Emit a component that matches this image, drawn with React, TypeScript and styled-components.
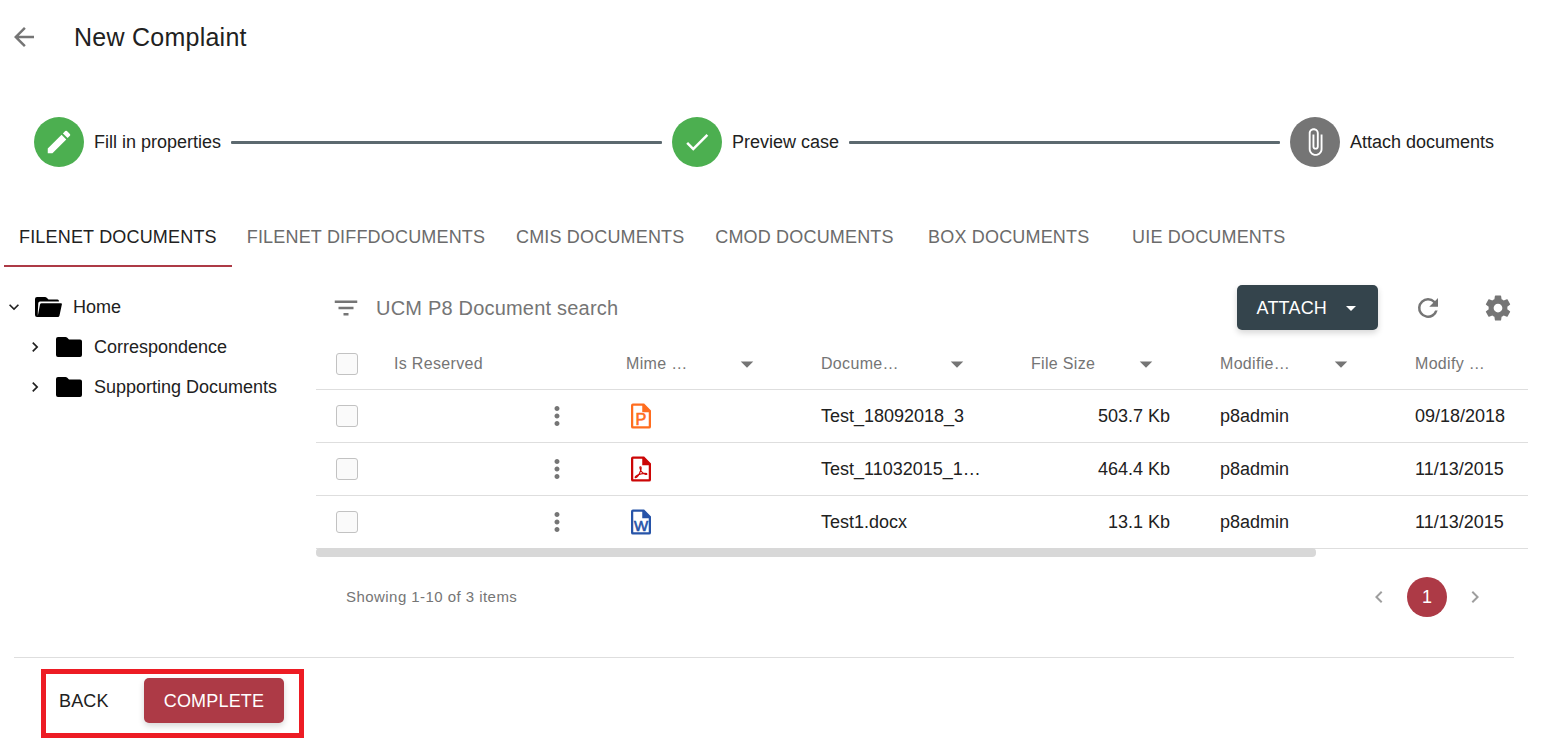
import React from "react";
import styled, { createGlobalStyle } from "styled-components";

const GlobalStyle = createGlobalStyle`
  *, *::before, *::after { box-sizing: border-box; }
  body {
    margin: 0;
    background: #fff;
    color: #212121;
    font-family: "Liberation Sans", Arial, sans-serif;
    font-size: 18px;
    line-height: 24px;
  }
  button, input { font: inherit; color: inherit; }
`;

const Svg = styled.svg<{ $size?: number }>`
  display: block;
  flex: none;
  width: ${(p) => p.$size ?? 30}px;
  height: ${(p) => p.$size ?? 30}px;
  fill: currentColor;
`;

const paths = {
  back: "M20 11H7.83l5.59-5.59L12 4l-8 8 8 8 1.41-1.41L7.83 13H20v-2z",
  pencil:
    "M3 17.25V21h3.75L17.81 9.94l-3.75-3.75L3 17.25zM20.71 7.04a1 1 0 0 0 0-1.41l-2.34-2.34a1 1 0 0 0-1.41 0l-1.83 1.83 3.75 3.75 1.83-1.83z",
  check: "M9 16.17L4.83 12l-1.42 1.41L9 19 21 7l-1.41-1.41z",
  clip: "M16.5 6v11.5c0 2.21-1.79 4-4 4s-4-1.79-4-4V5a2.5 2.5 0 0 1 5 0v10.5c0 .55-.45 1-1 1s-1-.45-1-1V6H10v9.5a2.5 2.5 0 0 0 5 0V5c0-2.21-1.79-4-4-4S7 2.79 7 5v12.5c0 3.04 2.46 5.5 5.5 5.5s5.5-2.46 5.5-5.5V6h-1.5z",
  down: "M7 10l5 5 5-5z",
  filter: "M10 18h4v-2h-4v2zM3 6v2h18V6H3zm3 7h12v-2H6v2z",
  refresh:
    "M17.65 6.35A7.96 7.96 0 0 0 12 4a8 8 0 1 0 7.73 10h-2.08A6 6 0 1 1 12 6c1.66 0 3.14.69 4.22 1.78L13 11h7V4l-2.35 2.35z",
  gear: "M19.43 12.98c.04-.32.07-.64.07-.98s-.03-.66-.07-.98l2.11-1.65c.19-.15.24-.42.12-.64l-2-3.46c-.12-.22-.39-.3-.61-.22l-2.49 1c-.52-.4-1.08-.73-1.69-.98l-.38-2.65A.49.49 0 0 0 14 2h-4c-.25 0-.46.18-.49.42l-.38 2.65c-.61.25-1.17.59-1.69.98l-2.49-1c-.23-.09-.49 0-.61.22l-2 3.46c-.13.22-.07.49.12.64l2.11 1.65c-.04.32-.07.65-.07.98s.03.66.07.98l-2.11 1.65c-.19.15-.24.42-.12.64l2 3.46c.12.22.39.3.61.22l2.49-1c.52.4 1.08.73 1.69.98l.38 2.65c.03.24.24.42.49.42h4c.25 0 .46-.18.49-.42l.38-2.65c.61-.25 1.17-.59 1.69-.98l2.49 1c.23.09.49 0 .61-.22l2-3.46c.12-.22.07-.49-.12-.64l-2.11-1.65zM12 15.5c-1.93 0-3.5-1.57-3.5-3.5s1.57-3.5 3.5-3.5 3.5 1.57 3.5 3.5-1.57 3.5-3.5 3.5z",
  more: "M12 8c1.1 0 2-.9 2-2s-.9-2-2-2-2 .9-2 2 .9 2 2 2zm0 2c-1.1 0-2 .9-2 2s.9 2 2 2 2-.9 2-2-.9-2-2-2zm0 6c-1.1 0-2 .9-2 2s.9 2 2 2 2-.9 2-2-.9-2-2-2z",
  left: "M15.41 7.41L14 6l-6 6 6 6 1.41-1.41L10.83 12z",
  right: "M10 6L8.59 7.41 13.17 12l-4.58 4.59L10 18l6-6z",
  expand: "M16.59 8.59L12 13.17 7.41 8.59 6 10l6 6 6-6z",
};

const Icon = ({ name, size }: { name: keyof typeof paths; size?: number }) => (
  <Svg viewBox="0 0 24 24" $size={size} aria-hidden="true">
    <path d={paths[name]} />
  </Svg>
);

const FolderSvg = styled.svg`
  display: block;
  flex: none;
  width: 27px;
  height: 20px;
`;

const Folder = ({ open }: { open?: boolean }) => (
  <FolderSvg viewBox="0 0 27 20" aria-hidden="true">
    {open ? (
      <path d="M2 0h8q1 0 2 1l1.500 1.500H22.500q1.500 0 1.500 2H5q-1.500 0-1.700 1.500L2.800 15V19L5 7.500Q5.300 6.200 6.500 6.200H26q1.100 0 .9 1L24.500 18.500Q24.200 20 22.700 20H2Q0 20 0 18V2Q0 0 2 0z" />
    ) : (
      <path d="M2 0h7.500q1 0 1.800.8L13 2.500H24q2 0 2 2V18q0 2-2 2H2Q0 20 0 18V2Q0 0 2 0z" />
    )}
  </FolderSvg>
);

type FileKind = "ppt" | "pdf" | "doc";
const fileColors: Record<FileKind, string> = { ppt: "#ff6d1f", pdf: "#cc0606", doc: "#2754a8" };
const fileNames: Record<FileKind, string> = { ppt: "PowerPoint", pdf: "PDF", doc: "Word" };

const FileSvg = styled(Svg)<{ $kind: FileKind }>`
  color: ${(p) => fileColors[p.$kind]};
`;

const FileIcon = ({ kind }: { kind: FileKind }) => (
  <FileSvg viewBox="0 0 24 24" role="img" aria-label={fileNames[kind]} $kind={kind}>
    <path
      fillRule="evenodd"
      d="M5.500 2H14.500L20 7.500V20.500Q20 22 18.500 22H5.500Q4 22 4 20.500V3.500Q4 2 5.500 2zM5.800 3.800V20.200H18.200V9H13V3.800z"
    />
    {kind === "pdf" ? (
      <path
        d="M11.300 10.200C12.300 9.900 12.300 11.500 11.700 13.200C10.800 15.800 9 18.900 7.600 18.900C6.300 18.500 9.500 16.400 12 15.900C14.300 15.300 16.800 15.300 16.800 16.100C16.500 16.900 14.300 16 13 14.700C11.600 13.300 10.600 10.600 11.300 10.200z"
        fill="none"
        stroke="currentColor"
        strokeWidth="0.900"
      />
    ) : (
      <text
        x="12"
        y="19"
        textAnchor="middle"
        fontSize={kind === "doc" ? 12 : 13}
        stroke="currentColor"
        strokeWidth="0.500"
      >
        {kind === "doc" ? "W" : "P"}
      </text>
    )}
  </FileSvg>
);

const IconButton = styled.button<{ $muted?: boolean }>`
  display: flex;
  padding: 0;
  border: 0;
  background: none;
  color: ${(p) => (p.$muted ? "#9e9e9e" : "#757575")};
  cursor: pointer;
`;

const Header = styled.header`
  display: flex;
  align-items: center;
  gap: 35px;
  height: 74px;
  padding-left: 9px;
`;

const Title = styled.h1`
  margin: 0;
  font-size: 25px;
  line-height: 32px;
  font-weight: 400;
  letter-spacing: 0.01em;
`;

const Stepper = styled.ol`
  display: flex;
  align-items: center;
  gap: 10px;
  margin: 0;
  padding: 43px 50px 40px 34px;
  list-style: none;
`;

const Step = styled.li<{ $last?: boolean }>`
  display: flex;
  align-items: center;
  gap: 10px;
  flex: ${(p) => (p.$last ? "none" : "1 1 auto")};
  white-space: nowrap;
  ${(p) =>
    !p.$last &&
    `&::after {
      content: "";
      flex: 1;
      height: 3px;
      border-radius: 1px;
      background: #5c696f;
    }`}
`;

const StepBadge = styled.span<{ $done?: boolean }>`
  display: grid;
  place-items: center;
  width: 50px;
  height: 50px;
  border-radius: 50%;
  background: ${(p) => (p.$done ? "#4caf50" : "#757575")};
  color: #fff;
`;

const Tabs = styled.nav`
  display: flex;
  padding-left: 4px;
`;

const Tab = styled.button<{ $active?: boolean }>`
  min-width: 200px;
  height: 60px;
  padding: 0 15px;
  border: 0;
  box-shadow: ${(p) => (p.$active ? "inset 0 -2px #ad3a46" : "none")};
  background: none;
  color: ${(p) => (p.$active ? "#212121" : "#6b6b6b")};
  letter-spacing: 0.01em;
  white-space: nowrap;
  cursor: pointer;
`;

const Main = styled.main`
  display: grid;
  grid-template-columns: 300px minmax(0, 1fr);
  gap: 16px;
  padding: 18px 16px 40px 0;
`;

const Tree = styled.ul`
  margin: 0;
  padding: 2px 0 0 4px;
  list-style: none;
`;

const SubTree = styled.ul`
  margin: 0;
  padding: 0 0 0 21px;
  list-style: none;
`;

const TreeItem = styled.button`
  display: flex;
  align-items: center;
  gap: 11px;
  height: 40px;
  padding: 0;
  border: 0;
  background: none;
  cursor: pointer;
`;

const Toolbar = styled.div`
  display: flex;
  align-items: center;
  padding: 0 15px;
  margin-bottom: 7px;
`;

const Search = styled.input`
  flex: 1;
  min-width: 0;
  margin-left: 15px;
  padding: 0;
  border: 0;
  outline: 0;
  background: none;
  font-size: 20px;
  letter-spacing: 0.01em;
  &::placeholder { color: #757575; opacity: 1; }
`;

const Tools = styled.div`
  display: flex;
  align-items: center;
  gap: 40px;
`;

const Button = styled.button<{ $tone?: "dark" | "primary" }>`
  display: flex;
  align-items: center;
  gap: 12px;
  height: 45px;
  padding: 0 20px;
  border: 0;
  border-radius: 5px;
  background: ${(p) => (p.$tone === "dark" ? "#34444c" : p.$tone === "primary" ? "#ad3a46" : "transparent")};
  color: ${(p) => (p.$tone ? "#fff" : "#212121")};
  box-shadow: ${(p) => (p.$tone ? "0 3px 6px rgba(0, 0, 0, 0.16)" : "none")};
  letter-spacing: 0.01em;
  cursor: pointer;
`;

const AttachButton = styled(Button)`
  margin-right: 35px;
  padding-right: 15px;
`;

const TableFrame = styled.div`
  overflow: hidden;
`;

const Table = styled.table`
  width: 100%;
  table-layout: fixed;
  border-collapse: separate;
  border-spacing: 0;
`;

const Col = styled.col<{ $w?: number }>`
  width: ${(p) => (p.$w ? `${p.$w}px` : "auto")};
`;

const Th = styled.th`
  height: 53px;
  padding: 2px 0 0 15px;
  border-bottom: 1px solid #dedede;
  color: #757575;
  font-size: 16px;
  font-weight: 400;
  letter-spacing: 0.02em;
  text-align: left;
  white-space: nowrap;
`;

const ThContent = styled.div`
  display: flex;
  align-items: center;
  justify-content: space-between;
  padding-right: 44px;
`;

const Td = styled.td<{ $numeric?: boolean }>`
  height: 53px;
  padding: 0 ${(p) => (p.$numeric ? 35 : 0)}px 0 15px;
  border-bottom: 1px solid #dedede;
  text-align: ${(p) => (p.$numeric ? "right" : "left")};
  white-space: nowrap;
`;

const Check = styled.input`
  display: block;
  appearance: none;
  width: 22px;
  height: 22px;
  margin: 0 0 0 5px;
  border: 1px solid #c2c2c2;
  border-radius: 3px;
  background: #fafafa;
  &:checked { background: #ad3a46; }
`;

const ScrollThumb = styled.div`
  width: 82.5%;
  height: 9px;
  margin-top: -1px;
  border-radius: 4px;
  background: #d8d8d8;
`;

const Pager = styled.div`
  display: flex;
  align-items: center;
  justify-content: space-between;
  padding: 20px 41px 0 30px;
`;

const Caption = styled.span`
  color: #757575;
  font-size: 15px;
  letter-spacing: 0.03em;
`;

const Pages = styled.div`
  display: flex;
  align-items: center;
  gap: 16px;
`;

const PageButton = styled.button`
  width: 40px;
  height: 40px;
  padding: 0;
  border: 0;
  border-radius: 50%;
  background: #ad3a46;
  color: #fff;
`;

const Footer = styled.footer`
  margin: 0 30px 0 14px;
  padding: 20px 25px;
  border-top: 1px solid #dedede;
`;

const Actions = styled.div`
  position: relative;
  display: inline-flex;
  gap: 15px;
  &::after {
    content: "";
    position: absolute;
    inset: -9px -20px -15px 2px;
    border: 5px solid #ed1c24;
    pointer-events: none;
  }
`;

const tabs = [
  "FILENET DOCUMENTS",
  "FILENET DIFFDOCUMENTS",
  "CMIS DOCUMENTS",
  "CMOD DOCUMENTS",
  "BOX DOCUMENTS",
  "UIE DOCUMENTS",
];

const rows: { kind: FileKind; name: string; size: string; by: string; date: string }[] = [
  { kind: "ppt", name: "Test_18092018_3", size: "503.7 Kb", by: "p8admin", date: "09/18/2018" },
  { kind: "pdf", name: "Test_11032015_1…", size: "464.4 Kb", by: "p8admin", date: "11/13/2015" },
  { kind: "doc", name: "Test1.docx", size: "13.1 Kb", by: "p8admin", date: "11/13/2015" },
];

const SortableTh = ({ label }: { label: string }) => (
  <Th scope="col">
    <ThContent>
      {label}
      <IconButton aria-label={`Sort by ${label}`}>
        <Icon name="down" />
      </IconButton>
    </ThContent>
  </Th>
);

export default function App() {
  return (
    <>
      <GlobalStyle />
      <Header>
        <IconButton aria-label="Go back">
          <Icon name="back" />
        </IconButton>
        <Title>New Complaint</Title>
      </Header>

      <Stepper>
        <Step>
          <StepBadge $done>
            <Icon name="pencil" />
          </StepBadge>
          Fill in properties
        </Step>
        <Step>
          <StepBadge $done>
            <Icon name="check" />
          </StepBadge>
          Preview case
        </Step>
        <Step $last>
          <StepBadge>
            <Icon name="clip" />
          </StepBadge>
          Attach documents
        </Step>
      </Stepper>

      <Tabs>
        {tabs.map((tab, i) => (
          <Tab key={tab} $active={i === 0}>
            {tab}
          </Tab>
        ))}
      </Tabs>

      <Main>
        <Tree>
          <li>
            <TreeItem>
              <Icon name="expand" size={20} />
              <Folder open />
              Home
            </TreeItem>
            <SubTree>
              {["Correspondence", "Supporting Documents"].map((name) => (
                <li key={name}>
                  <TreeItem>
                    <Icon name="right" size={20} />
                    <Folder />
                    {name}
                  </TreeItem>
                </li>
              ))}
            </SubTree>
          </li>
        </Tree>

        <section>
          <Toolbar>
            <IconButton aria-label="Filter">
              <Icon name="filter" />
            </IconButton>
            <Search type="text" aria-label="Document search" placeholder="UCM P8 Document search" />
            <AttachButton $tone="dark">
              ATTACH
              <Icon name="down" size={24} />
            </AttachButton>
            <Tools>
              <IconButton aria-label="Refresh">
                <Icon name="refresh" />
              </IconButton>
              <IconButton aria-label="Settings">
                <Icon name="gear" />
              </IconButton>
            </Tools>
          </Toolbar>

          <TableFrame>
            <Table>
              <colgroup>
                <Col $w={63} />
                <Col $w={148} />
                <Col $w={84} />
                <Col $w={195} />
                <Col $w={210} />
                <Col $w={189} />
                <Col $w={195} />
                <Col />
              </colgroup>
              <thead>
                <tr>
                  <Th>
                    <Check type="checkbox" aria-label="Select all" />
                  </Th>
                  <Th scope="col">Is Reserved</Th>
                  <Th />
                  <SortableTh label="Mime …" />
                  <SortableTh label="Docume…" />
                  <SortableTh label="File Size" />
                  <SortableTh label="Modifie…" />
                  <Th scope="col">Modify …</Th>
                </tr>
              </thead>
              <tbody>
                {rows.map((row) => (
                  <tr key={row.name}>
                    <Td>
                      <Check type="checkbox" aria-label={`Select ${row.name}`} />
                    </Td>
                    <Td />
                    <Td>
                      <IconButton aria-label="More actions">
                        <Icon name="more" />
                      </IconButton>
                    </Td>
                    <Td>
                      <FileIcon kind={row.kind} />
                    </Td>
                    <Td>{row.name}</Td>
                    <Td $numeric>{row.size}</Td>
                    <Td>{row.by}</Td>
                    <Td>{row.date}</Td>
                  </tr>
                ))}
              </tbody>
            </Table>
            <ScrollThumb />
          </TableFrame>

          <Pager>
            <Caption>Showing 1-10 of 3 items</Caption>
            <Pages>
              <IconButton $muted aria-label="Previous page">
                <Icon name="left" size={24} />
              </IconButton>
              <PageButton>1</PageButton>
              <IconButton $muted aria-label="Next page">
                <Icon name="right" size={24} />
              </IconButton>
            </Pages>
          </Pager>
        </section>
      </Main>

      <Footer>
        <Actions>
          <Button>BACK</Button>
          <Button $tone="primary">COMPLETE</Button>
        </Actions>
      </Footer>
    </>
  );
}
